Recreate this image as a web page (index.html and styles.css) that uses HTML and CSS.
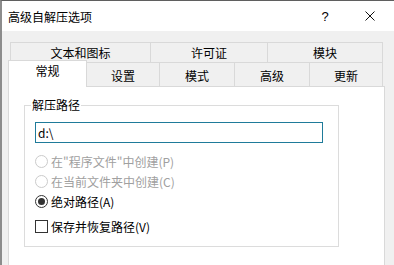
FILE: index.html
```html
<!DOCTYPE html>
<html lang="zh-CN">
<head>
<meta charset="utf-8">
<link rel="stylesheet" href="styles.css">
</head>
<body>
<div class="window">
  <div class="titlebar">
    <span class="title">高级自解压选项</span>
    <span class="help">?</span>
    <svg class="close" width="10" height="10" viewBox="0 0 10 10"><path d="M0.5 0.5 L9.5 9.5 M9.5 0.5 L0.5 9.5" stroke="#111" stroke-width="1" fill="none"/></svg>
  </div>
  <div class="body">
    <div class="tabrow back">
      <div class="tab t1">文本和图标</div>
      <div class="tab t2">许可证</div>
      <div class="tab t3">模块</div>
    </div>
    <div class="tabrow front">
      <div class="tab sel">常规</div>
      <div class="tab f2">设置</div>
      <div class="tab f3">模式</div>
      <div class="tab f4">高级</div>
      <div class="tab f5">更新</div>
    </div>
    <div class="panel">
      <fieldset class="group">
        <legend>解压路径</legend>
        <div class="field">d:\</div>
        <div class="opt disabled first"><span class="radio"></span>在"程序文件"中创建(P)</div>
        <div class="opt disabled"><span class="radio"></span>在当前文件夹中创建(C)</div>
        <div class="opt"><span class="radio on"></span>绝对路径(A)</div>
        <div class="opt check"><span class="box"></span>保存并恢复路径(V)</div>
      </fieldset>
    </div>
  </div>
</div>
</body>
</html>
```

FILE: styles.css
```css
html, body {
  margin: 0;
  padding: 0;
}
body {
  width: 394px;
  height: 265px;
  overflow: hidden;
  background: #fff;
  font-family: "Noto Sans CJK SC", "Noto Sans", sans-serif;
  font-size: 12px;
  color: #000;
}
.window {
  height: 265px;
  box-sizing: border-box;
  border-top: 1px solid #5f5f5f;
  border-left: 2px solid #8c8c8c;
  display: flex;
  flex-direction: column;
}
.titlebar {
  height: 30px;
  flex: none;
  background: #fff;
  display: flex;
  align-items: center;
  padding-left: 6px;
  padding-right: 19px;
}
.title {
  font-size: 12px;
  color: #000;
}
.help {
  margin-left: auto;
  width: 10px;
  text-align: center;
  font-family: "Liberation Sans", sans-serif;
  font-size: 13px;
  margin-right: 35px;
}
.close {
  display: block;
}
.body {
  flex: 1;
  background: #f0f0f0;
  padding: 11px 0 0 6px;
  display: flex;
  flex-direction: column;
}
.tabrow {
  display: flex;
  flex: none;
}
.tab {
  box-sizing: border-box;
  border: 1px solid #d9d9d9;
  display: flex;
  align-items: center;
  justify-content: center;
  background: #f0f0f0;
}
.back {
  margin-left: 2px;
  height: 21px;
}
.back .tab + .tab,
.front .tab + .tab {
  margin-left: -1px;
}
.t1 { width: 141px; }
.t2 { width: 118px; }
.t3 { width: 116px; }
.front {
  margin-top: -1px;
  height: 24px;
}
.front .tab {
  border-bottom: none;
  padding-top: 1px;
}
.sel {
  width: 79px;
  background: #fff;
  margin-top: -2px;
  margin-bottom: -1px;
  position: relative;
  z-index: 1;
  padding-top: 0;
  align-items: flex-start;
  padding-top: 3px;
}
.f2 { width: 74px; }
.f3 { width: 76px; }
.f4 { width: 76px; }
.f5 { width: 74px; }
.panel {
  width: 377px;
  box-sizing: border-box;
  flex: 1;
  background: #fff;
  border: 1px solid #d9d9d9;
  border-bottom: none;
  padding: 10px 0 0 15px;
}
.group {
  width: 314px;
  box-sizing: border-box;
  margin: 0;
  border: 1px solid #dcdcdc;
  padding: 0 15px 10px 10px;
}
.group legend {
  font-size: 12px;
  line-height: 16px;
  padding: 0 1px;
  margin-left: -4px;
}
.field {
  margin-top: 9px;
  width: 288px;
  height: 21px;
  box-sizing: border-box;
  border: 1px solid #1f7b9a;
  padding: 0 2px;
  line-height: 19px;
  font-size: 12px;
}
.opt {
  display: flex;
  align-items: center;
  height: 20px;
  gap: 3px;
}
.opt.first {
  margin-top: 8px;
}
.opt.disabled {
  color: #a0a0a0;
}
.radio {
  width: 13px;
  height: 13px;
  box-sizing: border-box;
  border-radius: 50%;
  border: 1px solid #333;
  background: #fff;
  display: flex;
  align-items: center;
  justify-content: center;
  flex: none;
}
.disabled .radio {
  border-color: #cbcbcb;
}
.radio.on::after {
  content: "";
  width: 7px;
  height: 7px;
  border-radius: 50%;
  background: #333;
}
.opt.check {
  margin-top: 5px;
}
.box {
  width: 13px;
  height: 13px;
  box-sizing: border-box;
  border: 1px solid #333;
  background: #fff;
  flex: none;
}
```
